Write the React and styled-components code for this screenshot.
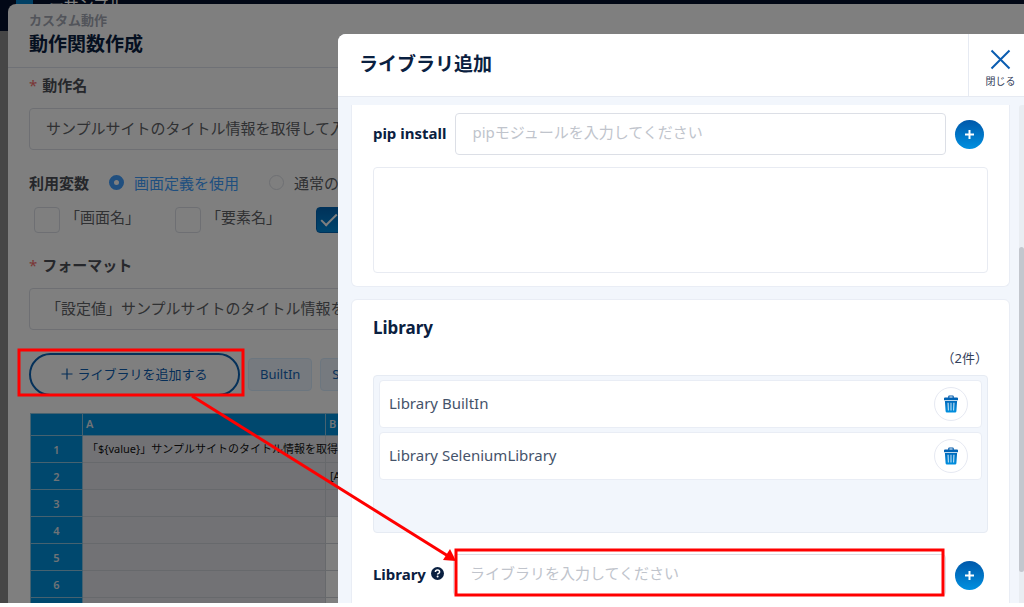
import { useState } from "react";
import styled, { createGlobalStyle } from "styled-components";

const GlobalStyle = createGlobalStyle`
  *, *::before, *::after {
    box-sizing: border-box;
  }

  body {
    margin: 0;
    background: #fff;
    overflow: hidden;
  }

  body, button, input, textarea {
    font-family: "Noto Sans", "Noto Sans CJK JP", sans-serif;
  }
`;

const Stage = styled.div`
  position: relative;
  height: calc(100vh - 4px);
  overflow: hidden;
  background: #8c8c8c;
`;

const TopBar = styled.header`
  display: flex;
  align-items: flex-start;
  gap: 16px;
  height: 31px;
  padding-left: 16px;
  background: #04102c;
  color: #fff;
  font-size: 15px;
  line-height: 8px;
  white-space: nowrap;
`;

const AppMark = styled.span`
  width: 17px;
  height: 8px;
  background: #0080cb;
`;

const Drawer = styled.section`
  position: absolute;
  top: 4px;
  right: 0;
  bottom: 0;
  left: 8px;
  overflow: hidden;
  background: #fff;
  border-radius: 8px 0 0 0;
`;

const DrawerHeader = styled.div`
  height: 64px;
  padding: 6px 21px 0;
  border-bottom: 1px solid #dfe3ec;
`;

const SubTitle = styled.p`
  margin: 0;
  font-size: 13px;
  line-height: 20px;
  font-weight: 600;
  color: #a4a9b4;
`;

const Title = styled.h2`
  margin: 0;
  font-size: 19px;
  line-height: 28px;
  font-weight: 700;
  color: #0a2040;
`;

const Form = styled.form`
  padding: 0 21px;
`;

const FieldLabel = styled.label`
  display: block;
  padding: ${(p) => p.$top}px 0 13px;
  font-size: 15px;
  line-height: 20px;
  font-weight: 700;
  color: #4c4f57;

  &::before {
    content: "*";
    margin-right: 5px;
    font-weight: 400;
    color: #f56c6c;
  }
`;

const TextInput = styled.input`
  display: block;
  width: 100%;
  height: 42px;
  padding: 0 16px 4px;
  border: 1px solid #dcdfe6;
  border-radius: 4px;
  background: #fff;
  font-size: 15px;
  color: #606266;
  outline: none;

  &::placeholder {
    color: #c0c4cc;
    opacity: 1;
  }
`;

const OptionRow = styled.div`
  display: flex;
  align-items: center;
  height: 24px;
  margin-top: 20px;
  font-size: 15px;
  white-space: nowrap;
`;

const OptionTitle = styled.span`
  width: 80px;
  font-weight: 700;
  color: #4c4f57;
`;

const RadioLabel = styled.label`
  display: flex;
  align-items: center;
  gap: 10px;
  width: 160px;
  color: ${(p) => (p.$on ? "#409eff" : "#606266")};
`;

const Radio = styled.input`
  appearance: none;
  width: 15px;
  height: 15px;
  margin: 0;
  border: 1px solid #dcdfe6;
  border-radius: 50%;
  background: #fff;

  &:checked {
    border: 5px solid #409eff;
  }
`;

const CheckRow = styled.div`
  display: flex;
  gap: 10px;
  margin-top: 13px;
  padding-left: 5px;
`;

const CheckLabel = styled.label`
  display: flex;
  flex: none;
  gap: 5px;
  width: 131px;
  font-size: 15px;
  line-height: 20px;
  color: #606266;
  white-space: nowrap;
`;

const CheckInput = styled.input`
  appearance: none;
  display: grid;
  place-items: center;
  width: 26px;
  height: 26px;
  margin: 0;
  border: 1px solid #dcdfe6;
  border-radius: 4px;
  background: #fff;

  &:checked {
    border-color: #0064b4;
    background: linear-gradient(#0064b4, #008bdc);
  }

  &:checked::after {
    content: "";
    width: 16px;
    height: 8px;
    margin-bottom: 4px;
    border: solid #fff;
    border-width: 0 0 2px 2px;
    transform: rotate(-45deg);
  }
`;

const ButtonRow = styled.div`
  display: flex;
  align-items: center;
  gap: 8px;
  margin-top: 23px;
`;

const AddLibraryButton = styled.button`
  display: flex;
  align-items: center;
  justify-content: center;
  gap: 4px;
  width: 211px;
  height: 43px;
  padding: 0 0 2px;
  border: 2px solid #0a62b4;
  border-radius: 22px;
  background: #fff;
  font-size: 13px;
  color: #0a5cb0;
`;

const Tag = styled.span`
  padding: 0 11px;
  border: 1px solid #d9ecff;
  border-radius: 4px;
  background: #ecf5ff;
  font-size: 13px;
  line-height: 31px;
  color: #1464b4;
`;

const Sheet = styled.table`
  width: 100%;
  margin: 17px 0 0 1px;
  border-collapse: collapse;
  table-layout: fixed;
  font-size: 11px;
  color: #111;

  th {
    border: 1px solid #8cc4e0;
    background: #0090dc;
    color: #dfe6ee;
    font-weight: 600;
  }

  thead th {
    height: 22px;
    padding: 0 3px 2px;
    text-align: left;
  }

  tbody tr {
    height: 27px;
  }

  td {
    padding: 0 4px 2px;
    border: 1px solid #cfd2d8;
    white-space: nowrap;
  }
`;

const Cell = styled.td`
  background: ${(p) => (p.$filled ? "#e4e5eb" : "#fff")};
`;

const Scrim = styled.div`
  position: absolute;
  inset: 0;
  background: rgba(0, 0, 0, 0.5);
`;

const LibraryDrawer = styled.section`
  position: absolute;
  top: 34px;
  right: 0;
  bottom: 0;
  left: 33%;
  display: flex;
  flex-direction: column;
  overflow: hidden;
  border-radius: 8px 0 0 0;
  background: #f2f6fc;
`;

const LibraryHeader = styled.div`
  display: flex;
  flex: none;
  align-items: stretch;
  justify-content: space-between;
  height: 63px;
  padding-left: 21px;
  border-bottom: 1px solid #e6eaf2;
  background: #fff;
`;

const LibraryTitle = styled(Title)`
  align-self: center;
  padding-bottom: 2px;
`;

const CloseButton = styled.button`
  display: flex;
  flex-direction: column;
  align-items: center;
  gap: 4px;
  width: 56px;
  padding: 15px 0 0 8px;
  border: 0;
  border-left: 1px solid #e6eaf2;
  background: none;
  font-size: 10px;
  line-height: 14px;
  color: #33405a;
`;

const LibraryBody = styled.div`
  display: flex;
  flex: 1;
  min-height: 0;
  padding-top: 8px;
`;

const Cards = styled.div`
  display: flex;
  flex: 1;
  flex-direction: column;
  gap: 12px;
  min-width: 0;
  padding: 0 9px 0 13px;
`;

const Card = styled.div`
  flex: none;
  padding: ${(p) => p.$top}px 21px 13px;
  border: 1px solid #e9edf5;
  border-radius: ${(p) => (p.$cut ? "0 0 6px 6px" : "6px")};
  border-top-width: ${(p) => (p.$cut ? 0 : 1)}px;
  background: #fff;
`;

const InputRow = styled.div`
  display: flex;
  align-items: center;
  gap: 9px;
  padding-right: 4px;
`;

const InputLabel = styled.label`
  display: flex;
  flex: none;
  align-items: center;
  gap: 5px;
  padding-bottom: 3px;
  font-size: 15px;
  line-height: 20px;
  font-weight: 700;
  color: #0a2040;
`;

const RoundButton = styled.button`
  display: grid;
  flex: none;
  place-items: center;
  width: 29px;
  height: 29px;
  padding: 0;
  border: 0;
  border-radius: 50%;
  background: linear-gradient(#0058aa, #0090e0);
`;

const ModuleBox = styled.textarea`
  display: block;
  width: 100%;
  height: 106px;
  margin-top: 12px;
  border: 1px solid #e8ebf2;
  border-radius: 4px;
  background: #fff;
  resize: none;
  outline: none;
`;

const CardTitle = styled.h3`
  margin: 0;
  font-size: 17px;
  line-height: 24px;
  font-weight: 700;
  color: #0a2040;
`;

const Count = styled.p`
  margin: 6px 0 5px;
  font-size: 13px;
  line-height: 24px;
  text-align: right;
  color: #33405a;
`;

const List = styled.ul`
  display: flex;
  flex-direction: column;
  gap: 4px;
  min-height: 158px;
  margin: 0 0 21px;
  padding: 4px 5px;
  border: 1px solid #e6ebf3;
  border-radius: 4px;
  background: #f2f6fc;
  list-style: none;
`;

const ListItem = styled.li`
  display: flex;
  align-items: center;
  justify-content: space-between;
  height: 48px;
  padding: 0 13px 0 9px;
  border: 1px solid #e9edf5;
  border-radius: 4px;
  background: #fff;
  font-size: 15px;
  color: #45536a;
`;

const ItemName = styled.span`
  padding-bottom: 2px;
`;

const TrashButton = styled.button`
  display: grid;
  place-items: center;
  width: 34px;
  height: 34px;
  padding: 0;
  border: 1px solid #e6e9f2;
  border-radius: 50%;
  background: #fff;
`;

const ScrollTrack = styled.div`
  flex: none;
  width: 5px;
  padding-top: 142px;
  border-radius: 3px 0 0 0;
  background: #e9edf2;
`;

const ScrollThumb = styled.div`
  height: 325px;
  border-radius: 3px;
  background: #c3c7ce;
`;

const Annotations = styled.svg`
  position: absolute;
  top: 0;
  left: 0;
  pointer-events: none;
`;

const PlusIcon = () => (
  <svg width="11" height="11" viewBox="0 0 11 11" aria-hidden="true">
    <path d="M5.5 1v9M1 5.5h9" stroke="#fff" strokeWidth="2" />
  </svg>
);

const ThinPlusIcon = () => (
  <svg width="12" height="12" viewBox="0 0 12 12" aria-hidden="true">
    <path d="M6 .5v11M.5 6h11" stroke="currentColor" strokeWidth="1.2" />
  </svg>
);

const CloseIcon = () => (
  <svg width="21" height="21" viewBox="0 0 21 21" aria-hidden="true">
    <path d="M1.5 1.5l18 18M19.5 1.5l-18 18" stroke="#0a5cb0" strokeWidth="2" />
  </svg>
);

const TrashIcon = () => (
  <svg width="14" height="18" viewBox="0 0 14 18" aria-hidden="true">
    <defs>
      <linearGradient id="trash" x1="0" y1="0" x2="0" y2="1">
        <stop offset="0" stopColor="#0058aa" />
        <stop offset="1" stopColor="#0090e0" />
      </linearGradient>
    </defs>
    <path
      fill="url(#trash)"
      fillRule="evenodd"
      d="M4.2 2.4V1.6Q4.2.5 5.3.5h3.4q1.1 0 1.1 1.1v.8H13q1 0 1 1v1.8H0V3.4q0-1 1-1zM5.4 2.4h3.2v-.8H5.4zM.9 6h12.2l-.7 10.2q-.1 1.3-1.3 1.3H2.9q-1.2 0-1.3-1.3zM3.6 7.7l.3 7.8h.8l-.2-7.8zM6.6 7.7v7.8h.8V7.7zM9.5 7.7l-.2 7.8h.8l.3-7.8z"
    />
  </svg>
);

const HelpIcon = () => (
  <svg width="13" height="13" viewBox="0 0 13 13" aria-hidden="true">
    <circle cx="6.5" cy="6.5" r="6.5" fill="#0a2040" />
    <path
      d="M4.4 5q0-1.9 2.1-1.9T8.6 4.9q0 1-1.1 1.5-.9.4-.9 1.2"
      fill="none"
      stroke="#fff"
      strokeWidth="1.5"
    />
    <circle cx="6.6" cy="9.6" r="1" fill="#fff" />
  </svg>
);

const rows = [
  ["「${value}」サンプルサイトのタイトル情報を取得", ""],
  ["", "[Arguments]"],
  ["", ""],
  ["", ""],
  ["", ""],
  ["", ""],
  ["", ""],
];

export default function App() {
  const [source, setSource] = useState("screen");
  const [libraries, setLibraries] = useState(["BuiltIn", "SeleniumLibrary"]);
  const [newLibrary, setNewLibrary] = useState("");

  const addLibrary = () => {
    if (newLibrary === "") return;
    setLibraries([...libraries, newLibrary]);
    setNewLibrary("");
  };

  return (
    <>
      <GlobalStyle />
      <Stage>
        <TopBar>
          <AppMark />
          <span>ーサンプル</span>
        </TopBar>

        <Drawer>
          <DrawerHeader>
            <SubTitle>カスタム動作</SubTitle>
            <Title>動作関数作成</Title>
          </DrawerHeader>
          <Form onSubmit={(e) => e.preventDefault()}>
            <FieldLabel htmlFor="name" $top={7}>動作名</FieldLabel>
            <TextInput id="name" defaultValue="サンプルサイトのタイトル情報を取得して入力する" />

            <OptionRow>
              <OptionTitle>利用変数</OptionTitle>
              <RadioLabel $on={source === "screen"}>
                <Radio
                  type="radio"
                  name="source"
                  checked={source === "screen"}
                  onChange={() => setSource("screen")}
                />
                画面定義を使用
              </RadioLabel>
              <RadioLabel $on={source === "normal"}>
                <Radio
                  type="radio"
                  name="source"
                  checked={source === "normal"}
                  onChange={() => setSource("normal")}
                />
                通常の変数を使用
              </RadioLabel>
            </OptionRow>

            <CheckRow>
              <CheckLabel><CheckInput type="checkbox" />「画面名」</CheckLabel>
              <CheckLabel><CheckInput type="checkbox" />「要素名」</CheckLabel>
              <CheckLabel><CheckInput type="checkbox" defaultChecked />「設定値」</CheckLabel>
            </CheckRow>

            <FieldLabel htmlFor="format" $top={22}>フォーマット</FieldLabel>
            <TextInput id="format" defaultValue="「設定値」サンプルサイトのタイトル情報を取得して入力する" />

            <ButtonRow>
              <AddLibraryButton type="button">
                <ThinPlusIcon />
                ライブラリを追加する
              </AddLibraryButton>
              {libraries.map((name) => (
                <Tag key={name}>{name}</Tag>
              ))}
            </ButtonRow>

            <Sheet>
              <colgroup>
                <col style={{ width: 52 }} />
                <col style={{ width: 243 }} />
                <col />
              </colgroup>
              <thead>
                <tr>
                  <th />
                  <th>A</th>
                  <th>B</th>
                </tr>
              </thead>
              <tbody>
                {rows.map(([a, b], i) => (
                  <tr key={i}>
                    <th>{i + 1}</th>
                    <Cell $filled>{a}</Cell>
                    <Cell $filled={i < 3}>{b}</Cell>
                  </tr>
                ))}
              </tbody>
            </Sheet>
          </Form>
        </Drawer>

        <Scrim />

        <LibraryDrawer>
          <LibraryHeader>
            <LibraryTitle>ライブラリ追加</LibraryTitle>
            <CloseButton type="button">
              <CloseIcon />
              閉じる
            </CloseButton>
          </LibraryHeader>

          <LibraryBody>
            <Cards>
              <Card $cut $top={8}>
                <InputRow>
                  <InputLabel htmlFor="pip">pip install</InputLabel>
                  <TextInput id="pip" placeholder="pipモジュールを入力してください" />
                  <RoundButton type="button" aria-label="モジュールを追加">
                    <PlusIcon />
                  </RoundButton>
                </InputRow>
                <ModuleBox aria-label="モジュール一覧" readOnly />
              </Card>

              <Card $top={16}>
                <CardTitle>Library</CardTitle>
                <Count>（{libraries.length}件）</Count>
                <List>
                  {libraries.map((name) => (
                    <ListItem key={name}>
                      <ItemName>Library {name}</ItemName>
                      <TrashButton
                        type="button"
                        aria-label={`${name}を削除`}
                        onClick={() => setLibraries(libraries.filter((l) => l !== name))}
                      >
                        <TrashIcon />
                      </TrashButton>
                    </ListItem>
                  ))}
                </List>
                <InputRow>
                  <InputLabel htmlFor="library">
                    Library
                    <HelpIcon />
                  </InputLabel>
                  <TextInput
                    id="library"
                    placeholder="ライブラリを入力してください"
                    value={newLibrary}
                    onChange={(e) => setNewLibrary(e.target.value)}
                  />
                  <RoundButton type="button" aria-label="ライブラリを追加" onClick={addLibrary}>
                    <PlusIcon />
                  </RoundButton>
                </InputRow>
              </Card>
            </Cards>
            <ScrollTrack>
              <ScrollThumb />
            </ScrollTrack>
          </LibraryBody>
        </LibraryDrawer>

        <Annotations width="1024" height="603" viewBox="0 0 1024 603" aria-hidden="true">
          <g fill="none" stroke="#f00" strokeWidth="3">
            <rect x="19" y="350" width="224" height="45" />
            <rect x="456" y="550" width="487" height="45" />
            <path d="M192 396L448 556" />
          </g>
          <path d="M456 561L450 549L443 560Z" fill="#f00" />
        </Annotations>
      </Stage>
    </>
  );
}
